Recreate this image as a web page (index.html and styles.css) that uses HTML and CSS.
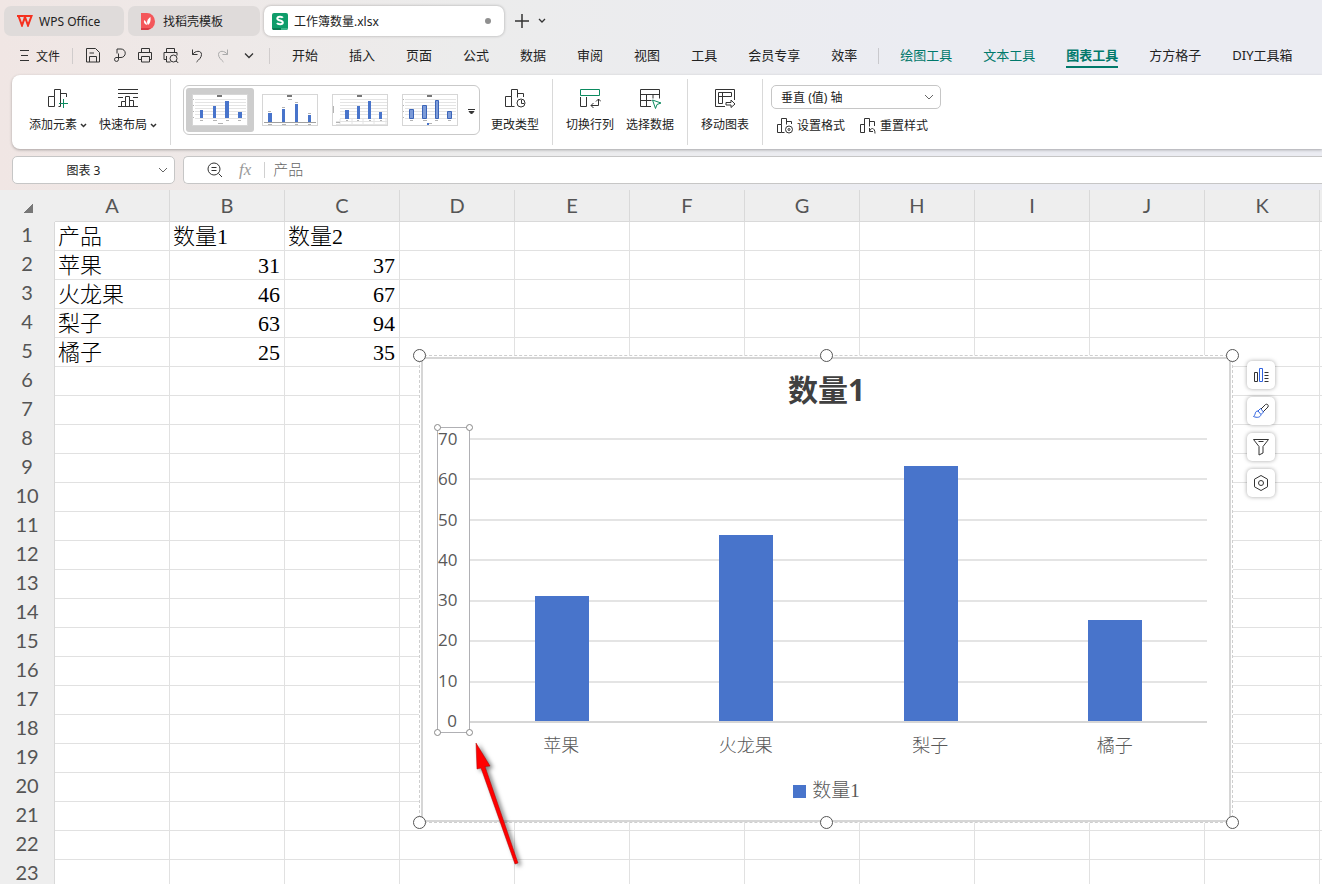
FILE: index.html
```html
<!DOCTYPE html>
<html lang="zh-CN">
<head>
  <meta charset="UTF-8">
  <title>工作簿数量.xlsx</title>
  <meta name="viewport" content="width=device-width, initial-scale=1.0">
  <link rel="stylesheet" href="styles.css">
</head>
<body>

  <header class="tabs">
    <button class="tab tab-home">
      <svg width="16" height="12" viewBox="0 0 16 12"><path d="M0 1h6M1.5 1l3.500 9.500L8 2l3 8.500L14.500 1H7l2 4"/></svg>
      WPS Office
    </button>
    <button class="tab tab-docer">
      <svg width="14" height="17" viewBox="0 0 14 17"><path d="M0 0h6a8 8.500 0 0 1 0 17H0z" fill="#f4575a"/><path d="M0 15h10l-3 2H0z" fill="#d93b43"/><path d="M7 12C5 9 6.500 6 9.500 4c.5 4-.5 6.500-2.500 8zM6 12C3.500 11.500 2.500 9.500 3 7c2 1 3 3 3 5z" fill="#fff"/></svg>
      找稻壳模板
    </button>
    <button class="tab active">
      <svg width="16" height="17" viewBox="0 0 16 17"><rect width="16" height="17" rx="2" fill="#0f9d6b"/><path d="M0 15h9v2H1z" fill="#0a7a52"/><path d="M9 15h7l-1 2H9z" fill="#3db489"/><path class="letter" d="M10.800 4.800C10 3.300 5.300 3.200 5.300 5.600c0 2.500 5.500 1.400 5.500 3.900 0 2.400-4.800 2.200-5.800.5"/></svg>
      工作簿数量.xlsx
      <span class="unsaved"></span>
    </button>
    <button class="icon-btn new-tab" aria-label="新建"><svg width="14" height="14" viewBox="0 0 14 14"><path d="M7 0v14M0 7h14" stroke-width="1.5"/></svg></button>
    <button class="icon-btn" aria-label="标签列表"><svg width="8" height="6" viewBox="0 0 8 6"><path d="M1 1l3 3 3-3" stroke-width="1.3"/></svg></button>
  </header>

  <nav class="menu">
    <button class="file"><svg width="9" height="12" viewBox="0 0 9 12"><path d="M0 .5h9M1 5.5h7M0 10.5h9"/></svg>文件</button>
    <div class="quick">
      <button class="icon-btn" aria-label="保存"><svg width="15" height="15" viewBox="0 0 15 15"><path d="M.5.5h9l4 4v9.500H.5zM3.500 14V8.500h7V14M3.500 5h4.500"/></svg></button>
      <button class="icon-btn" aria-label="输出"><svg width="13" height="15" viewBox="0 0 13 15"><path d="M4 5.500V1h4a4 4 0 0 1 0 8.500H3a2 2 0 1 0 2.500 2V5.500"/></svg></button>
      <button class="icon-btn" aria-label="打印"><svg width="15" height="15" viewBox="0 0 15 15"><path d="M3.500 4.500v-4h8v4M3.500 11.500H.5v-7h13v7h-2.500M3.500 8.500h8v5.500h-8z"/></svg></button>
      <button class="icon-btn" aria-label="打印预览"><svg width="16" height="15" viewBox="0 0 16 15"><path d="M3.500 4.500v-4h8v4M3.500 11.500H1v-7h13v3M3.500 8v6h4M13 13l2.500 2"/><circle cx="10.500" cy="10.500" r="3.500"/></svg></button>
      <button class="icon-btn" aria-label="撤销"><svg width="12" height="14" viewBox="0 0 12 14"><path d="M1.500.5v5h5M1.500 5.500C4 1.500 10.500 1 10.500 5.500c0 3-2.500 5-5 7.500"/></svg></button>
      <button class="icon-btn muted" aria-label="恢复"><svg width="12" height="14" viewBox="0 0 12 14"><path d="M10.500.5v5h-5M10.500 5.500C8 1.500 1.500 1 1.500 5.500c0 3 2.500 5 5 7.500"/></svg></button>
      <button class="icon-btn" aria-label="更多"><svg width="10" height="6" viewBox="0 0 10 6"><path d="M1 .5l4 4 4-4" stroke-width="1.3"/></svg></button>
    </div>
    <div class="menu-items">
      <a href="#">开始</a>
      <a href="#">插入</a>
      <a href="#">页面</a>
      <a href="#">公式</a>
      <a href="#">数据</a>
      <a href="#">审阅</a>
      <a href="#">视图</a>
      <a href="#">工具</a>
      <a href="#">会员专享</a>
      <a href="#">效率</a>
      <span class="sep"></span>
      <a href="#" class="tool">绘图工具</a>
      <a href="#" class="tool">文本工具</a>
      <a href="#" class="tool current">图表工具</a>
      <a href="#">方方格子</a>
      <a href="#">DIY工具箱</a>
    </div>
  </nav>

  <section class="ribbon">
    <div class="group">
      <button class="big">
        <svg width="22" height="22" viewBox="0 0 22 22"><path d="M1.500 18.500V8.500h6v10zM7.500 8.500v-7h6v17h-2M13.500 5.500h6V9"/><path class="green" d="M16.500 11v9M12 15.500h9"/></svg>
        <span>添加元素<svg class="caret" width="7" height="5" viewBox="0 0 7 5"><path d="M1 1l2.500 2.500L6 1"/></svg></span>
      </button>
      <button class="big">
        <svg width="22" height="22" viewBox="0 0 22 22"><path d="M1 1.500h20M1 5.500h20M1 9.500h5M16 9.500h5M1 18.500h20M4.500 18.500v-5h4v5M8.500 13.500v-5h4v10M12.500 12.500h4v6"/></svg>
        <span>快速布局<svg class="caret" width="7" height="5" viewBox="0 0 7 5"><path d="M1 1l2.500 2.500L6 1"/></svg></span>
      </button>
    </div>
    <div class="group styles">
      <div class="gallery">
        <button class="thumb picked" aria-label="样式 1"><svg width="56" height="32" viewBox="0 0 56 32"><path class="lines" d="M3 5.500h51M3 8.500h51M3 11.500h51M3 14.500h51M3 17.500h51M3 20.500h51M3 24.500h51"/><path class="bars" d="M8 16h3v8H8zM21 12h3v12h-3zM33 7h4v17h-4zM46 18h4v6h-4z"/><path class="title" d="M25 1h5v2h-5z"/><path class="marks" d="M8 26h3v1H8zM21 26h4v1h-4zM34 26h3v1h-3zM46 26h3v1h-3zM26 29h5v1h-5zM1 5h1v1H1zM1 11h1v1H1zM1 17h1v1H1zM1 23h1v1H1z"/></svg></button>
        <button class="thumb" aria-label="样式 2"><svg width="56" height="32" viewBox="0 0 56 32"><path class="base" d="M2 28.500h52"/><path class="bars" d="M6 19h4v9H6zM20 15h3v13h-3zM33 10h3v18h-3zM46 21h3v7h-3z"/><path class="title" d="M25 1h5v2h-5z"/><path class="marks" d="M26 5h4v1h-4zM6 17h3v1H6zM20 13h3v1h-3zM33 8h3v1h-3zM46 19h3v1h-3zM6 30h4v1H6zM20 30h4v1h-4zM33 30h3v1h-3zM46 30h3v1h-3z"/></svg></button>
        <button class="thumb" aria-label="样式 3"><svg width="56" height="32" viewBox="0 0 56 32"><path class="lines" d="M8 5.500h47M8 8.500h47M8 11.500h47M8 14.500h47M8 17.500h47M8 20.500h47M8 24.500h47M4 27.500h51M4 30.500h51M8 25v5M20 25v5M31 25v5M42 25v5M54 25v5"/><path class="bars" d="M13 16h4v9h-4zM25 12h3v13h-3zM36 7h3v18h-3zM47 18h3v7h-3z"/><path class="title" d="M25 1h5v2h-5z"/><path class="marks" d="M1 12h1v7H1zM4 28h4v1H4zM14 26h2v1h-2zM25 26h2v1h-2zM37 26h2v1h-2zM48 26h2v1h-2z"/></svg></button>
        <button class="thumb" aria-label="样式 4"><svg width="56" height="32" viewBox="0 0 56 32"><path class="lines" d="M3 5.500h51M3 8.500h51M3 11.500h51M3 14.500h51M3 17.500h51M3 20.500h51M3 24.500h51"/><path class="bars soft" d="M7.500 15.500h4v9h-4zM20.500 11.500h4v13h-4zM33.500 6.500h3v18h-3zM45.500 17.500h4v7h-4z"/><path class="title" d="M25 1h5v2h-5z"/><path class="marks" d="M8 26h3v1H8zM21 26h4v1h-4zM33 26h3v1h-3zM46 26h3v1h-3zM27 29h3v1h-3zM1 5h1v1H1zM1 11h1v1H1zM1 17h1v1H1zM1 23h1v1H1z"/><path class="bars" d="M25 29h2v2h-2z"/></svg></button>
        <button class="more" aria-label="更多样式"><svg width="7" height="6" viewBox="0 0 7 6"><path d="M0 .5h7M1 2.500h5L3.500 5z" fill="#333"/></svg></button>
      </div>
      <button class="big">
        <svg width="22" height="22" viewBox="0 0 22 22"><path d="M1.500 18.500v-10h6v10zM7.500 8.500v-7h6v8M7.500 18.500h3M13.500 5.500h6V9"/><circle cx="17" cy="15" r="4"/><path d="M17.500 12v3.500H20"/></svg>
        <span>更改类型</span>
      </button>
    </div>
    <div class="group data">
      <button class="big">
        <svg width="22" height="22" viewBox="0 0 22 22"><path class="green" d="M1.500 1.500h19v6h-19z"/><path d="M1.500 9v9.500h6V9M12 17.500h7.500V11M17 13.500l2.500-2.500 2.500 2.500M14.500 15L12 17.500l2.500 2.500"/></svg>
        <span>切换行列</span>
      </button>
      <button class="big">
        <svg width="22" height="22" viewBox="0 0 22 22"><path d="M12 18.500H1.500v-17h19v9M1.500 6.500h19M7.500 6.500v12M1.500 12.500h11M14 6.500v4"/><path class="green" d="M13.500 12l8.500 3-4 1.500-1.500 4z"/></svg>
        <span>选择数据</span>
      </button>
    </div>
    <div class="group">
      <button class="big">
        <svg width="22" height="22" viewBox="0 0 22 22"><path d="M11 18.500H1.500v-17h19V12M4.500 15.500v-11h13v4h-13M8.500 4.500v11h-4M12 14.500h5v-2.500l4 4-4 3.500v-2.500h-5z"/></svg>
        <span>移动图表</span>
      </button>
    </div>
    <div class="group format">
      <select class="select part" aria-label="图表元素">
        <option>垂直 (值) 轴</option>
        <option>水平 (类别) 轴</option>
        <option>图表区</option>
      </select>
      <div class="format-row">
        <button class="small"><svg width="18" height="16" viewBox="0 0 18 16"><path d="M1.500 14.500v-8h4v8zM5.500 6.500v-6h5v6M5.500 14.500h3M10.500 3.500h5V6"/><circle cx="13" cy="11.500" r="3.500"/><circle cx="13" cy="11.500" r="1"/></svg>设置格式</button>
        <button class="small"><svg width="18" height="16" viewBox="0 0 18 16"><path d="M1.500 14.500v-8h4v8zM5.500 14.500v-14h5v8M10.500 3.500h5V8M10.500 10v3.500H14M10.500 13.500c1-4 5.500-4.500 5.500 2"/></svg>重置样式</button>
      </div>
    </div>
  </section>

  <section class="formula">
    <select class="select name-box" aria-label="名称框">
      <option>图表 3</option>
    </select>
    <div class="formula-bar">
      <svg width="16" height="16" viewBox="0 0 16 16"><circle cx="7" cy="7" r="6"/><path d="M4.500 5.500h5M4.500 8.500h5M11.500 11.500L15 15"/></svg>
      <span class="fx">fx</span>
      <input type="text" value="产品" aria-label="编辑栏">
    </div>
  </section>

  <main class="sheet">
    <table class="grid" id="grid"></table>

    <div class="chart">
      <div class="chart-area">
        <h2>数量1</h2>
        <div class="plot">
          <div class="axis" id="axis"><i class="dot tl"></i><i class="dot tr"></i><i class="dot bl"></i><i class="dot br"></i></div>
          <div class="bars-area" id="bars"></div>
        </div>
        <div class="categories" id="categories"></div>
        <div class="legend"><span class="swatch"></span>数量1</div>
      </div>
      <i class="handle h-tl"></i><i class="handle h-tc"></i><i class="handle h-tr"></i>
      <i class="handle h-bl"></i><i class="handle h-bc"></i><i class="handle h-br"></i>

      <div class="side">
        <button aria-label="图表元素"><svg width="18" height="18" viewBox="0 0 18 18"><path d="M2.500 6.500h3v9h-3zM12.500 6.500h4M12.500 9.500h4M12.500 12.500h4M12.500 15.500h4"/><path class="blue" d="M7.500 2.500h3v13h-3z"/></svg></button>
        <button aria-label="图表样式"><svg width="18" height="18" viewBox="0 0 18 18"><path d="M9 7l4.500-4.500c1.500-1 3.500.5 2.500 2.500L11 10"/><path class="blue" d="M8.500 6.500l3 3.500-2.500 2.500-3-3.500zM6 9c-3.500 0-2 3.500-4.500 5.500 3.500 1.500 7 1 7.500-2"/></svg></button>
        <button aria-label="图表筛选"><svg width="18" height="18" viewBox="0 0 18 18"><path d="M1.500 1.500h15L11 8.500v6.500l-4 2v-8.500zM6.500 3.500h5"/></svg></button>
        <button aria-label="设置"><svg width="18" height="18" viewBox="0 0 18 18"><path d="M9 1.500l6.500 3.700v7.600L9 16.500l-6.500-3.700V5.200z"/><circle cx="9" cy="9" r="2.500"/></svg></button>
      </div>
    </div>

    <svg class="arrow" width="60" height="140" viewBox="0 0 60 140">
      <path d="M6 3l14 23-5 .5L48 123l-3 1L11 28l-4 1z"/>
    </svg>
  </main>

  <script src="script.js"></script>
</body>
</html>
```
FILE: script.js
```js
const columns = ["A", "B", "C", "D", "E", "F", "G", "H", "I", "J", "K", ""];
const rowCount = 23;
const data = [
  ["产品", "数量1", "数量2"],
  ["苹果", 31, 37],
  ["火龙果", 46, 67],
  ["梨子", 63, 94],
  ["橘子", 25, 35]
];

function buildGrid() {
  let html = '<thead><tr><th class="corner"><span></span></th>';
  columns.forEach(c => html += `<th>${c}</th>`);
  html += "</tr></thead><tbody>";

  for (let r = 0; r < rowCount; r++) {
    html += `<tr><th>${r + 1}</th>`;
    columns.forEach((c, i) => {
      const value = data[r] && data[r][i] !== undefined ? data[r][i] : "";
      const cls = typeof value === "number" ? ' class="num"' : "";
      html += `<td${cls}>${value}</td>`;
    });
    html += "</tr>";
  }
  document.getElementById("grid").innerHTML = html + "</tbody>";
}

function buildChart() {
  const max = 70;
  const axis = document.getElementById("axis");
  const bars = document.getElementById("bars");
  const categories = document.getElementById("categories");

  for (let v = max; v >= 0; v -= 10) {
    axis.insertAdjacentHTML("beforeend", `<span>${v}</span>`);
  }

  data.slice(1).forEach(([name, value]) => {
    bars.insertAdjacentHTML("beforeend", `<div class="bar" style="height:${value / max * 100}%"></div>`);
    categories.insertAdjacentHTML("beforeend", `<span>${name}</span>`);
  });
}

buildGrid();
buildChart();
```
FILE: styles.css
```css
:root {
  --line: #e1e1e1;
  --head: #eeeeee;
  --text: #222;
  --green: #00796b;
  --blue: #4874cb;
  --ui: "Noto Sans", "Noto Sans CJK SC", sans-serif;
  --cell: "Liberation Serif", "Noto Sans CJK SC", serif;
}

* {
  box-sizing: border-box;
}

body {
  margin: 0;
  height: 100vh;
  overflow: hidden;
  display: flex;
  flex-direction: column;
  font-family: var(--ui);
  font-size: 12px;
  color: var(--text);
  background: linear-gradient(90deg, #f0e6e4, #ececec 35%, #ebecf2 70%);
}

button, select, input {
  font: inherit;
  color: inherit;
  border: none;
  background: none;
  padding: 0;
}

svg {
  fill: none;
  stroke: #333;
  flex: none;
}

/* window tabs */
.tabs {
  display: flex;
  align-items: center;
  gap: 4px;
  padding: 6px 4px 0;
}

.tab {
  display: flex;
  align-items: center;
  gap: 6px;
  width: 120px;
  height: 30px;
  padding: 0 13px;
  border-radius: 7px;
  background: #dfdbda;
  white-space: nowrap;
}

.tab svg {
  stroke: none;
}

.tab-home svg {
  stroke: #f5311f;
  stroke-width: 2;
}

.tab .letter {
  stroke: #fff;
  stroke-width: 2;
}

.tab-docer {
  width: 132px;
  gap: 8px;
}

.tab.active {
  width: 240px;
  padding: 0 13px 0 8px;
  background: #fff;
  box-shadow: 0 0 3px rgba(0, 0, 0, 0.3);
}

.unsaved {
  width: 6px;
  height: 6px;
  margin-left: auto;
  border-radius: 50%;
  background: #8f8f8f;
}

.icon-btn {
  display: flex;
  align-items: center;
  justify-content: center;
  width: 16px;
}

.new-tab {
  margin-left: 6px;
}

/* menu */
.menu {
  display: flex;
  align-items: center;
  height: 39px;
  padding-left: 20px;
}

.file {
  display: flex;
  align-items: center;
  gap: 7px;
}

.quick {
  display: flex;
  gap: 10px;
  margin-left: 12px;
  padding: 0 12px;
  height: 16px;
  border-left: 1px solid #d0cccc;
  border-right: 1px solid #d0cccc;
}

.quick .muted svg {
  stroke: #aaa;
}

.menu-items {
  display: flex;
  align-items: center;
  gap: 31px;
  margin-left: 22px;
  font-size: 13px;
}

.menu-items a {
  color: var(--text);
  text-decoration: none;
  white-space: nowrap;
  line-height: 22px;
  border-bottom: 2px solid transparent;
}

.menu-items .tool {
  color: var(--green);
}

.menu-items .current {
  font-weight: bold;
  border-color: var(--green);
}

.sep {
  width: 1px;
  height: 16px;
  margin: 0 -10px;
  background: #c9c9cd;
}

/* ribbon */
.ribbon {
  display: flex;
  height: 74px;
  margin-left: 12px;
  padding: 4px 0;
  background: #fff;
  border-radius: 8px 0 0 8px;
  box-shadow: 0 1px 3px rgba(0, 0, 0, 0.3);
}

.group {
  display: flex;
  align-items: flex-start;
  gap: 12px;
  padding: 9px 13px 0;
  border-right: 1px solid #d9d9d9;
}

.group:first-child {
  padding-left: 17px;
}

.group:last-child {
  border-right: none;
}

.big {
  display: flex;
  flex-direction: column;
  align-items: center;
  gap: 6px;
  white-space: nowrap;
  line-height: 18px;
}

.caret {
  margin-left: 3px;
  vertical-align: middle;
}

.caret path {
  stroke-width: 1.5;
}

.green {
  stroke: #0b8a5f;
}

.styles {
  gap: 11px;
  padding-left: 12px;
}

.gallery {
  display: flex;
  align-items: center;
  height: 50px;
  margin-top: -3px;
  padding: 2px;
  gap: 2px;
  border: 1px solid #c9c9c9;
  border-radius: 6px;
}

.thumb {
  display: flex;
  align-items: center;
  justify-content: center;
  width: 68px;
  height: 44px;
  border-radius: 3px;
}

.thumb svg {
  background: #fff;
  outline: 1px solid #d6d6d6;
  outline-offset: -1px;
  stroke: none;
}

.picked {
  background: #cdcdcd;
}

.thumb .lines {
  stroke: #e4e4e4;
}

.thumb .base {
  stroke: #a0a0a0;
}

.thumb .bars {
  fill: var(--blue);
}

.thumb .soft {
  fill: #7c9bd8;
  stroke: #3b64b8;
}

.thumb .title {
  fill: #777;
}

.thumb .marks {
  fill: #b4b4b4;
}

.more {
  width: 11px;
}

.data {
  padding: 9px 13px 0;
}

.format {
  flex-direction: column;
  gap: 8px;
  padding: 6px 8px 0;
}

.format-row {
  display: flex;
  gap: 14px;
  padding-left: 5px;
}

.small {
  display: flex;
  align-items: center;
  gap: 3px;
  line-height: 18px;
  white-space: nowrap;
}

.select {
  appearance: none;
  border: 1px solid #c6c6c6;
  border-radius: 5px;
  background: #fff url("data:image/svg+xml,%3Csvg xmlns='http://www.w3.org/2000/svg' width='10' height='6' fill='none' stroke='%23666'%3E%3Cpath d='M1 1l4 4 4-4'/%3E%3C/svg%3E") no-repeat right 6px center;
}

.part {
  width: 170px;
  height: 24px;
  padding: 0 20px 0 9px;
}

/* formula row */
.formula {
  display: flex;
  gap: 8px;
  padding: 7px 0 6px 12px;
}

.name-box {
  width: 163px;
  height: 28px;
  padding-right: 20px;
  text-align: center;
  text-align-last: center;
}

.formula-bar {
  flex: 1;
  display: flex;
  align-items: center;
  height: 28px;
  padding-left: 23px;
  background: #fff;
  border: 1px solid #c6c6c6;
  border-right: none;
  border-radius: 5px 0 0 5px;
}

.fx {
  margin: 0 13px 0 16px;
  font: italic 17px "Liberation Serif", serif;
  color: #999;
}

.formula-bar input {
  flex: 1;
  height: 16px;
  padding: 0 0 4px 8px;
  border-left: 1px solid #d0d0d0;
  font-size: 15px;
  font-weight: 300;
  color: #666;
}

/* sheet */
.sheet {
  position: relative;
  flex: 1;
  overflow: hidden;
  background: #fff;
}

.grid {
  width: 1435px;
  table-layout: fixed;
  border-collapse: separate;
  border-spacing: 0;
  font-family: var(--cell);
  font-size: 22px;
  font-weight: 300;
  line-height: 26px;
  color: #000;
}

.grid th {
  padding: 0;
  height: 29px;
  font: 20px/24px Lato, sans-serif;
  color: #555;
  background: var(--head);
  border-right: 1px solid #d9d9d9;
  vertical-align: top;
}

.grid thead th {
  height: 32px;
  line-height: 31px;
  border-bottom: 1px solid #d9d9d9;
}

.grid thead .corner {
  width: 55px;
  border-color: var(--head);
}

.corner span {
  display: block;
  width: 10px;
  height: 10px;
  margin: 13px 0 0 23px;
  background: linear-gradient(135deg, transparent 50%, #777 50%);
}

.grid td {
  height: 29px;
  padding: 2px 4px 0 3px;
  border-right: 1px solid var(--line);
  border-bottom: 1px solid var(--line);
  white-space: nowrap;
}

.grid .num {
  text-align: right;
}

/* chart object on the sheet */
.chart {
  position: absolute;
  left: 419px;
  top: 165px;
  width: 814px;
  height: 468px;
  padding: 1px 1px 0;
  background: #fff;
  border: 1px dashed #cfcfcf;
}

.chart-area {
  height: 100%;
  padding: 11px 22px 0 14px;
  border: 2px solid #d6d6d6;
  font-family: "Open Sans", "Noto Sans CJK SC", sans-serif;
  color: #595959;
}

.chart h2 {
  margin: 0 0 17px 9px;
  text-align: center;
  font-size: 30px;
  line-height: 40px;
  color: #404040;
}

.plot {
  display: flex;
  height: 306px;
}

.axis {
  position: relative;
  display: flex;
  flex-direction: column;
  justify-content: space-between;
  width: 33px;
  padding-right: 12px;
  text-align: right;
  font-size: 17px;
  line-height: 22px;
  border: 1px solid #b0b0b4;
}

.dot {
  position: absolute;
  width: 7px;
  height: 7px;
  border: 1px solid #888;
  border-radius: 50%;
  background: #fff;
}

.tl { left: -4px; top: -4px; }
.tr { right: -4px; top: -4px; }
.bl { left: -4px; bottom: -4px; }
.br { right: -4px; bottom: -4px; }

.bars-area {
  flex: 1;
  display: flex;
  align-items: flex-end;
  justify-content: space-around;
  margin: 11px 0 10px;
  border-bottom: 2px solid #d6d6d6;
  background: repeating-linear-gradient(#e4e4e4 0 2px, transparent 2px calc(100% / 7));
}

.bar {
  width: 54px;
  background: var(--blue);
}

.categories {
  display: flex;
  margin: 1px 0 0 32px;
  font-family: var(--cell);
  font-size: 18px;
  font-weight: 300;
  line-height: 24px;
}

.categories span {
  flex: 1;
  text-align: center;
}

.legend {
  display: flex;
  align-items: center;
  justify-content: center;
  gap: 6px;
  margin: 21px 0 0 9px;
  font-family: var(--cell);
  font-size: 19px;
  font-weight: 300;
  line-height: 24px;
}

.swatch {
  width: 13px;
  height: 13px;
  background: var(--blue);
}

.handle {
  position: absolute;
  width: 13px;
  height: 13px;
  border: 1px solid #555;
  border-radius: 50%;
  background: #fff;
}

.h-tl, .h-tc, .h-tr { top: -7px; }
.h-bl, .h-bc, .h-br { bottom: -7px; }
.h-tl, .h-bl { left: -7px; }
.h-tc, .h-bc { left: calc(50% - 6px); }
.h-tr, .h-br { right: -7px; }

.side {
  position: absolute;
  left: 827px;
  top: 5px;
  display: flex;
  flex-direction: column;
  gap: 8px;
}

.side button {
  display: flex;
  align-items: center;
  justify-content: center;
  width: 28px;
  height: 28px;
  border-radius: 5px;
  background: #fff;
  box-shadow: 0 0 4px rgba(0, 0, 0, 0.35);
}

.side .blue {
  stroke: #2f62e0;
}

.arrow {
  position: absolute;
  left: 470px;
  top: 550px;
  overflow: visible;
  fill: #f00;
  stroke: #a00;
  stroke-width: 0.5;
  filter: drop-shadow(3px 2px 2px rgba(0, 0, 0, 0.5));
}
```
